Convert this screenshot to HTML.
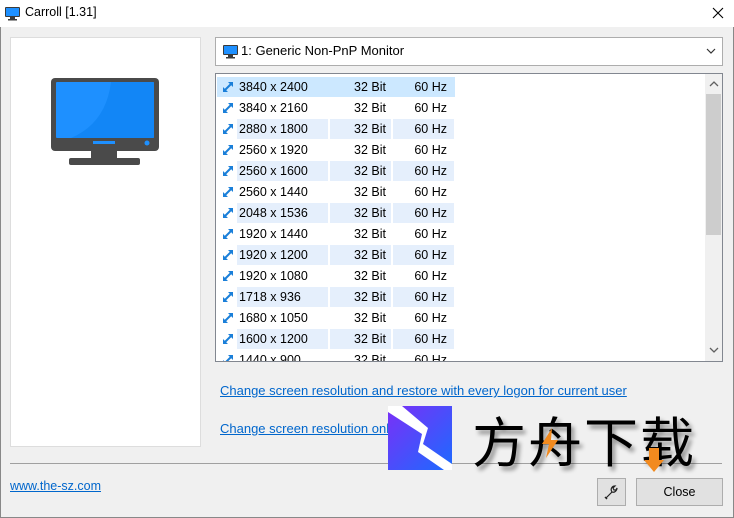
<!DOCTYPE html>
<html><head><meta charset="utf-8"><style>
*{margin:0;padding:0;box-sizing:border-box}
body{width:734px;height:518px;background:#f0f0f0;font-family:"Segoe UI","Liberation Sans","Noto Sans CJK SC",sans-serif;font-size:12px;color:#000;position:relative;overflow:hidden}
.abs{position:absolute}
.title{left:0;top:0;width:734px;height:27px;background:#fff}
.row{position:absolute;left:0;height:21px;width:240px;font-size:12.5px}
.cell{position:absolute;top:0;height:20px;line-height:20px}
a{color:#0066cc;text-decoration:underline}
</style></head><body>
<div class="abs" style="left:0;top:0;width:734px;height:518px;border:1px solid #888"></div>
<div class="abs title"></div>
<svg class="abs" style="left:5px;top:7px" width="16" height="14"><rect x="0" y="0" width="15" height="10" rx="1" fill="#3a3a3a"/><rect x="1" y="1" width="13" height="8" fill="#1e90ff"/><rect x="5" y="10" width="5" height="2" fill="#3a3a3a"/><rect x="3" y="12" width="9" height="1.5" fill="#3a3a3a"/></svg>
<div class="abs" style="left:25px;top:5px;font-size:12.5px">Carroll [1.31]</div>
<svg class="abs" style="left:712px;top:7px" width="12" height="12"><path d="M1 1 L11 11 M11 1 L1 11" stroke="#000" stroke-width="1.1"/></svg>

<div class="abs" style="left:10px;top:37px;width:191px;height:410px;background:#fff;border:1px solid #ddd"></div>
<svg class="abs" style="left:51px;top:78px" width="110" height="90">
<rect x="0" y="0" width="108" height="73" rx="4" fill="#4a4a4a"/>
<rect x="5" y="4" width="98" height="56" rx="1" fill="#1e90ff"/>
<path d="M60 4 Q55 45 20 60 L103 60 L103 4Z" fill="#0a80f0" opacity="0.6"/>
<rect x="42" y="63" width="22" height="3" fill="#1e90ff"/>
<circle cx="96" cy="65" r="2.5" fill="#1e90ff"/>
<rect x="40" y="73" width="26" height="8" fill="#4a4a4a"/>
<rect x="18" y="80" width="71" height="7" rx="2" fill="#4a4a4a"/>
</svg>

<div class="abs" style="left:215px;top:37px;width:508px;height:29px;background:#fff;border:1px solid #adadad"></div>
<svg class="abs" style="left:223px;top:45px" width="16" height="14"><rect x="0" y="0" width="15" height="10" rx="1" fill="#3a3a3a"/><rect x="1" y="1" width="13" height="8" fill="#1e90ff"/><rect x="5" y="10" width="5" height="2" fill="#3a3a3a"/><rect x="3" y="12" width="9" height="1.5" fill="#3a3a3a"/></svg>
<div class="abs" style="left:241px;top:43px;font-size:13px">1: Generic Non-PnP Monitor</div>
<svg class="abs" style="left:706px;top:47px" width="10" height="8"><path d="M1 2 L5 6 L9 2" stroke="#333" fill="none" stroke-width="1.2"/></svg>

<div class="abs" style="left:215px;top:73px;width:508px;height:289px;background:#fff;border:1px solid #828790;overflow:hidden">
<div id="list" class="abs" style="left:0;top:3px;width:490px;height:284px"></div>
<div class="abs" style="left:489px;top:0;width:17px;height:287px;background:#f0f0f0"></div>
<div class="abs" style="left:490px;top:20px;width:15px;height:141px;background:#cdcdcd"></div>
<svg class="abs" style="left:493px;top:6px" width="10" height="8"><path d="M1 6 L5 2 L9 6" stroke="#606060" fill="none" stroke-width="1.3"/></svg>
<svg class="abs" style="left:493px;top:272px" width="10" height="8"><path d="M1 2 L5 6 L9 2" stroke="#606060" fill="none" stroke-width="1.3"/></svg>
</div>

<div class="abs" style="left:220px;top:383px;font-size:13px"><a>Change screen resolution and restore with every logon for current user</a></div>
<div class="abs" style="left:220px;top:421px;font-size:13px"><a>Change screen resolution only</a></div>
<div class="abs" style="left:10px;top:463px;width:712px;height:1px;background:#a0a0a0"></div>
<div class="abs" style="left:10px;top:479px;font-size:12.5px"><a>www.the-sz.com</a></div>
<div class="abs" style="left:597px;top:478px;width:29px;height:28px;background:#e1e1e1;border:1px solid #adadad"></div>
<svg class="abs" style="left:603px;top:484px" width="16" height="16"><path d="M3 14 L9 8 M9 8 C7 5 9 2 12 2 L10 4 L11 6 L13 6 L14 4 C14 7 11 9 9 8" stroke="#222" fill="none" stroke-width="1.2"/><path d="M2 13 L4 15" stroke="#222" stroke-width="1.5"/></svg>
<div class="abs" style="left:636px;top:478px;width:87px;height:28px;background:#e1e1e1;border:1px solid #adadad;text-align:center;line-height:26px;font-size:12.5px">Close</div>

<!-- watermark -->
<svg class="abs" style="left:388px;top:406px" width="66" height="66"><defs><linearGradient id="g" x1="0" y1="0" x2="1" y2="1"><stop offset="0" stop-color="#7b2ff7"/><stop offset="1" stop-color="#1b6bff"/></linearGradient></defs><rect width="64" height="64" fill="url(#g)"/><path d="M0 0 L14 0 L40 22 L35 38 L64 58 L64 64 L56 64 L30 46 L34 28 L0 6Z" fill="#fff"/></svg>
<div class="abs" style="left:472px;top:408px;font-size:54px;line-height:62px;font-family:'Noto Sans CJK SC',sans-serif;text-shadow:3px 4px 4px rgba(0,0,0,.4);letter-spacing:2px">方舟下载</div>
<svg class="abs" style="left:540px;top:428px" width="20" height="30"><path d="M12 0 L2 16 L9 16 L6 30 L18 12 L11 12Z" fill="#f28a1e"/></svg>
<svg class="abs" style="left:644px;top:448px" width="20" height="24"><rect x="5" y="0" width="10" height="12" fill="#f28a1e"/><path d="M0 12 L20 12 L10 24Z" fill="#f28a1e"/></svg>

<script>
var d=[["3840 x 2400"],["3840 x 2160"],["2880 x 1800"],["2560 x 1920"],["2560 x 1600"],["2560 x 1440"],["2048 x 1536"],["1920 x 1440"],["1920 x 1200"],["1920 x 1080"],["1718 x 936"],["1680 x 1050"],["1600 x 1200"],["1440 x 900"]];
var h="";
d.forEach(function(r,i){
var y=i*21, sel=i==0, alt=i%2==0;
var bg=sel?"#cce8ff":(alt?"#e5effc":"transparent");
h+='<div class="row" style="top:'+y+'px">';
if(sel)h+='<div class="cell" style="left:1px;width:238px;background:#cce8ff"></div>';
h+='<div class="cell" style="left:21px;width:91px;background:'+bg+'"></div><div class="cell" style="left:114px;width:61px;background:'+bg+'"></div><div class="cell" style="left:177px;width:61px;background:'+bg+'"></div>';
h+='<svg class="abs" style="left:6px;top:4px" width="12" height="12"><path d="M2.5 9.5 L9.5 2.5" stroke="#1a7fd9" stroke-width="2"/><path d="M6 1 L11 1 L11 6Z M1 6 L1 11 L6 11Z" fill="#1a7fd9"/></svg>';
h+='<div class="cell" style="left:23px">'+r[0]+'</div><div class="cell" style="left:114px;width:56px;text-align:right">32 Bit</div><div class="cell" style="left:177px;width:54px;text-align:right">60 Hz</div></div>';
});
document.getElementById("list").innerHTML=h;
</script>
</body></html>
